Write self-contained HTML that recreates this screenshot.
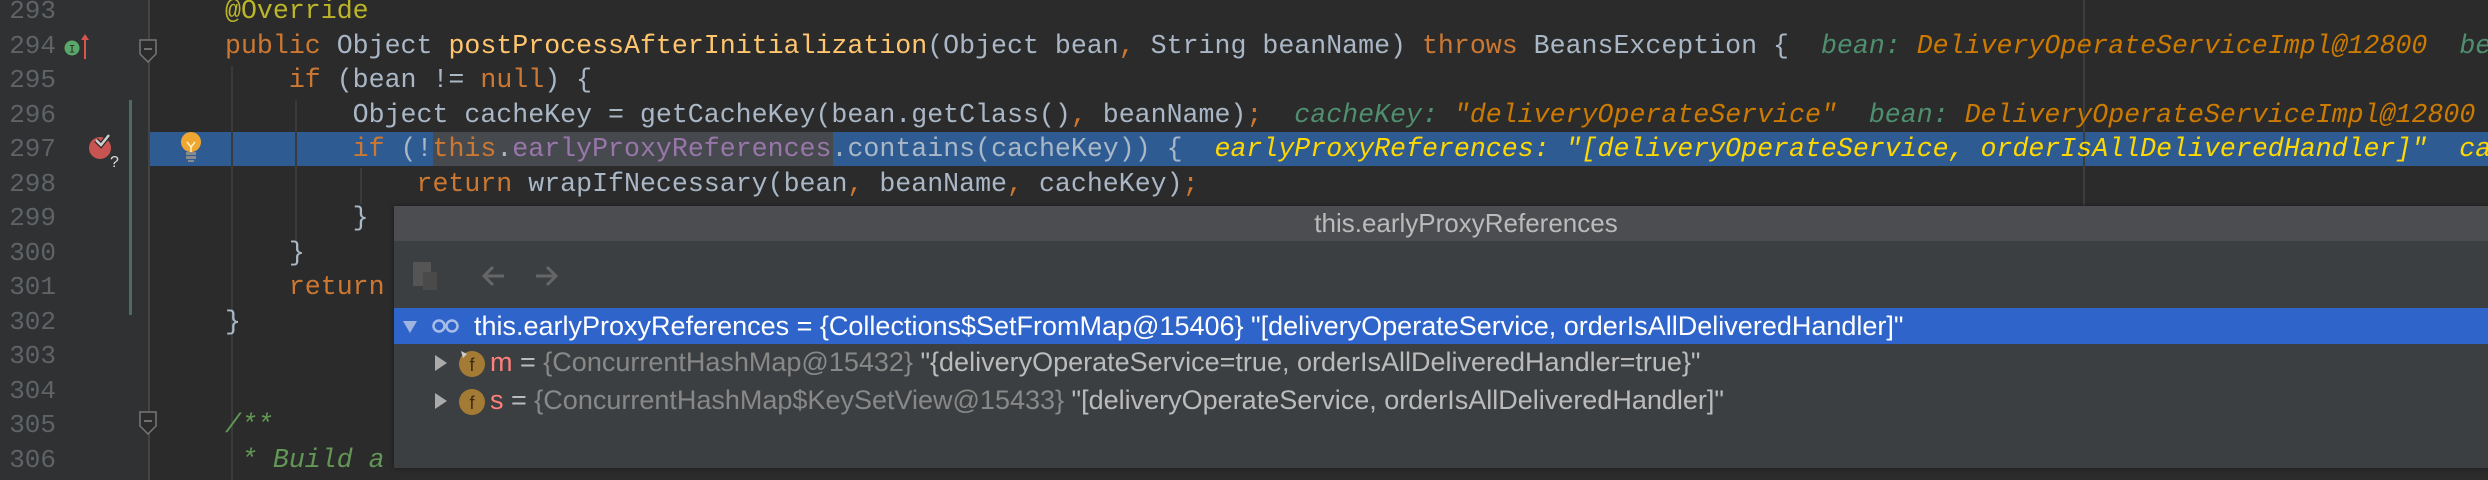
<!DOCTYPE html>
<html><head><meta charset="utf-8"><style>
*{margin:0;padding:0;box-sizing:border-box}
body{width:2488px;height:480px;background:#2b2b2b;overflow:hidden;position:relative;font-family:"Liberation Mono",monospace}
.gut{position:absolute;left:0;top:0;width:148px;height:480px;background:#2f3133}
.hl{position:absolute;left:150px;top:132px;width:2338px;height:34px;background:#2d5b92}
.ln{position:absolute;left:0;width:56px;text-align:right;color:#606366;font-size:26px;line-height:34.5px;height:34.5px}
.cl{position:absolute;left:225px;white-space:pre;color:#a9b7c6;font-size:26.6px;line-height:34.5px;height:34.5px}
.k{color:#cc7832}.m{color:#ffc66d}.a{color:#bbb529}.f{color:#9876aa}.c{color:#629755;font-style:italic}
.hn{color:#4f8f6f;font-style:italic}.hv{color:#cc7a00;font-style:italic}.hy{color:#ffd800;font-style:italic}
.vl{position:absolute;width:2px;background:#3a3a3a}
.pop{position:absolute;left:394px;top:206px;width:2094px;height:262px;background:#3c3f41;box-shadow:0 0 4px #1a1a1a;font-family:"Liberation Sans",sans-serif}
.tt{height:35px;background:#4b4d50;color:#bbbbbb;font-size:26px;line-height:35px;text-align:center;padding-left:50px}
.row{position:absolute;left:0;width:2094px;height:36px;line-height:36px;font-size:27px;white-space:pre;color:#bbbbbb}
</style></head><body>
<div class="gut"></div>
<div class="hl"></div>
<div style="position:absolute;left:433px;top:132px;width:400px;height:34px;background:#464a4e"></div>
<div style="position:absolute;left:2083px;top:0;width:2px;height:206px;background:#3d3d3d"></div>
<div style="position:absolute;left:129px;top:100px;width:3px;height:215px;background:#4b6b66"></div>
<div class="vl" style="left:148px;top:0;height:480px;background:#444"></div>
<div class="vl" style="left:231px;top:66px;height:414px"></div>
<div class="vl" style="left:295px;top:100px;height:140px"></div>
<div class="vl" style="left:360px;top:168px;height:36px"></div>

<div class="ln" style="top:-6px">293</div>
<div class="ln" style="top:28.5px">294</div>
<div class="ln" style="top:63px">295</div>
<div class="ln" style="top:97.5px">296</div>
<div class="ln" style="top:132px">297</div>
<div class="ln" style="top:166.5px">298</div>
<div class="ln" style="top:201px">299</div>
<div class="ln" style="top:235.5px">300</div>
<div class="ln" style="top:270px">301</div>
<div class="ln" style="top:304.5px">302</div>
<div class="ln" style="top:339px">303</div>
<div class="ln" style="top:373.5px">304</div>
<div class="ln" style="top:408px">305</div>
<div class="ln" style="top:442.5px">306</div>

<svg style="position:absolute;left:60px;top:32px" width="30" height="30"><circle cx="12" cy="16" r="7.5" fill="#59a869"/><text x="12" y="20.5" font-size="11" text-anchor="middle" fill="#2b2b2b" font-family="Liberation Mono">I</text><line x1="25" y1="27" x2="25" y2="4" stroke="#d9534f" stroke-width="2"/><path d="M21 8 L25 2 L29 8Z" fill="#d9534f"/></svg>
<svg style="position:absolute;left:86px;top:132px" width="36" height="40"><circle cx="14" cy="16" r="11" fill="#c75450"/><path d="M10 8 L15 13 L23 3" stroke="#2b2b2b" stroke-width="5" fill="none"/><path d="M10 8 L15 13 L23 3" stroke="#cfcfcf" stroke-width="2.5" fill="none"/><text x="24" y="35" font-size="16" fill="#ddd" font-family="Liberation Sans">?</text></svg>
<svg style="position:absolute;left:178px;top:130px" width="26" height="36"><circle cx="13" cy="12" r="10" fill="#f0a732"/><path d="M9 12 L13 17 L17 12 M13 17 V22" stroke="#fff3c0" stroke-width="1.5" fill="none"/><rect x="8" y="22" width="10" height="3" fill="#8a8a8a"/><rect x="8" y="26" width="10" height="3" fill="#8a8a8a"/><rect x="10" y="30" width="6" height="2" fill="#8a8a8a"/></svg>
<svg style="position:absolute;left:138px;top:38px" width="22" height="26"><path d="M2 2 H18 V16 L10 24 L2 16Z" fill="#2b2b2b" stroke="#777" stroke-width="1.5"/><line x1="6" y1="11" x2="14" y2="11" stroke="#888" stroke-width="1.5"/></svg>
<svg style="position:absolute;left:138px;top:410px" width="22" height="26"><path d="M2 2 H18 V16 L10 24 L2 16Z" fill="#2b2b2b" stroke="#777" stroke-width="1.5"/><line x1="6" y1="11" x2="14" y2="11" stroke="#888" stroke-width="1.5"/></svg>

<div class="cl a" style="top:-6px">@Override</div>
<div class="cl" style="top:28.5px"><span class="k">public</span> Object <span class="m">postProcessAfterInitialization</span>(Object bean<span class="k">,</span> String beanName) <span class="k">throws</span> BeansException {  <span class="hn">bean:</span> <span class="hv">DeliveryOperateServiceImpl@12800</span>  <span class="hn">bean</span></div>
<div class="cl" style="top:63px">    <span class="k">if</span> (bean != <span class="k">null</span>) {</div>
<div class="cl" style="top:97.5px">        Object cacheKey = getCacheKey(bean.getClass()<span class="k">,</span> beanName)<span class="k">;</span>  <span class="hn">cacheKey:</span> <span class="hv">"deliveryOperateService"</span>  <span class="hn">bean:</span> <span class="hv">DeliveryOperateServiceImpl@12800</span></div>
<div class="cl" style="top:132px">        <span class="k">if</span> (!<span class="k">this</span>.<span class="f">earlyProxyReferences</span>.contains(cacheKey)) {  <span class="hy">earlyProxyReferences: "[deliveryOperateService, orderIsAllDeliveredHandler]"  ca</span></div>
<div class="cl" style="top:166.5px">            <span class="k">return</span> wrapIfNecessary(bean<span class="k">,</span> beanName<span class="k">,</span> cacheKey)<span class="k">;</span></div>
<div class="cl" style="top:201px">        }</div>
<div class="cl" style="top:235.5px">    }</div>
<div class="cl" style="top:270px">    <span class="k">return</span></div>
<div class="cl" style="top:304.5px">}</div>
<div class="cl c" style="top:408px">/**</div>
<div class="cl c" style="top:442.5px"> * Build a</div>

<div class="pop">
<div class="tt">this.earlyProxyReferences</div>
<svg style="position:absolute;left:14px;top:52px" width="150" height="36"><rect x="5" y="4" width="18" height="24" fill="#555"/><rect x="15" y="14" width="14" height="18" fill="#4a4a4a"/><path d="M96 18 H76 M85 9 L76 18 L85 27" stroke="#666" stroke-width="3" fill="none"/><path d="M128 18 H148 M139 9 L148 18 L139 27" stroke="#666" stroke-width="3" fill="none"/></svg>
<div class="row" style="top:102px;height:36px;background:#2f65ca;color:#fff"><svg style="position:absolute;left:8px;top:12px" width="16" height="14"><path d="M1 1 H15 L8 13Z" fill="#9fb4e0"/></svg><svg style="position:absolute;left:38px;top:10px" width="30" height="16"><circle cx="7" cy="8" r="5.5" stroke="#a8bde6" stroke-width="2.5" fill="none"/><circle cx="20" cy="8" r="5.5" stroke="#a8bde6" stroke-width="2.5" fill="none"/></svg><span style="position:absolute;left:80px">this.earlyProxyReferences = {Collections$SetFromMap@15406} "[deliveryOperateService, orderIsAllDeliveredHandler]"</span></div>
<div class="row" style="top:138px"><svg style="position:absolute;left:40px;top:10px" width="14" height="18"><path d="M1 1 V17 L13 9Z" fill="#aaa"/></svg><svg style="position:absolute;left:64px;top:4px" width="30" height="30"><circle cx="14" cy="16" r="13" fill="#a37b34"/><text x="14" y="23" font-size="18" text-anchor="middle" fill="#3a2a10" font-family="Liberation Sans">f</text><path d="M3 3 L9 6 L5 10Z" fill="#ccc"/></svg><span style="position:absolute;left:96px"><span style="color:#ff7f7a">m</span> = <span style="color:#888">{ConcurrentHashMap@15432}</span> "{deliveryOperateService=true, orderIsAllDeliveredHandler=true}"</span></div>
<div class="row" style="top:176px"><svg style="position:absolute;left:40px;top:10px" width="14" height="18"><path d="M1 1 V17 L13 9Z" fill="#aaa"/></svg><svg style="position:absolute;left:64px;top:4px" width="30" height="30"><circle cx="14" cy="16" r="13" fill="#a37b34"/><text x="14" y="23" font-size="18" text-anchor="middle" fill="#3a2a10" font-family="Liberation Sans">f</text></svg><span style="position:absolute;left:96px"><span style="color:#ff7f7a">s</span> = <span style="color:#888">{ConcurrentHashMap$KeySetView@15433}</span> "[deliveryOperateService, orderIsAllDeliveredHandler]"</span></div>
</div>
</body></html>
